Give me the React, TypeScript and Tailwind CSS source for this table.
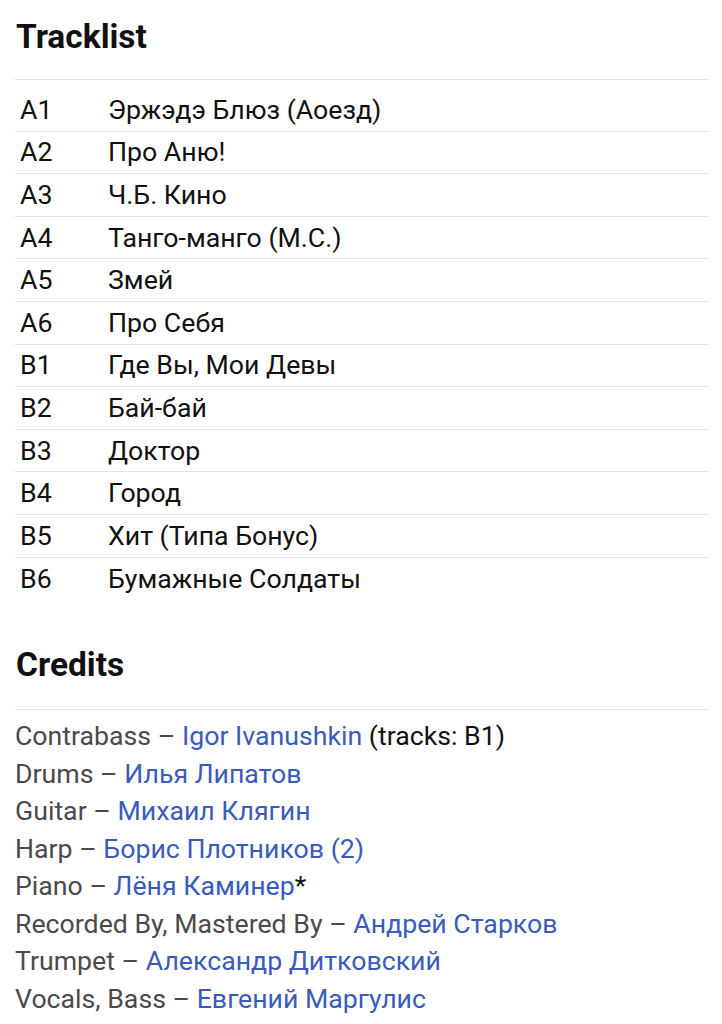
const tracks: [string, string][] = [
  ['A1', 'Эржэдэ Блюз (Аоезд)'],
  ['A2', 'Про Аню!'],
  ['A3', 'Ч.Б. Кино'],
  ['A4', 'Танго-манго (М.С.)'],
  ['A5', 'Змей'],
  ['A6', 'Про Себя'],
  ['B1', 'Где Вы, Мои Девы'],
  ['B2', 'Бай-бай'],
  ['B3', 'Доктор'],
  ['B4', 'Город'],
  ['B5', 'Хит (Типа Бонус)'],
  ['B6', 'Бумажные Солдаты'],
];

const credits: { role: string; name: string; tail?: string }[] = [
  { role: 'Contrabass', name: 'Igor Ivanushkin', tail: ' (tracks: B1)' },
  { role: 'Drums', name: 'Илья Липатов' },
  { role: 'Guitar', name: 'Михаил Клягин' },
  { role: 'Harp', name: 'Борис Плотников (2)' },
  { role: 'Piano', name: 'Лёня Каминер', tail: '*' },
  { role: 'Recorded By, Mastered By', name: 'Андрей Старков' },
  { role: 'Trumpet', name: 'Александр Дитковский' },
  { role: 'Vocals, Bass', name: 'Евгений Маргулис' },
];

export default function App() {
  return (
    <div className="min-h-[1024px] bg-white pl-[15px] pr-[14px] pt-[17px] text-[#111] font-['Roboto',sans-serif]">
      <h2 className="text-[33.5px] leading-[40px] font-bold pl-px">Tracklist</h2>
      <div className="mt-[22px] h-px bg-[#e3e3e3]" />
      <div className="mt-[9px]">
        {tracks.map(([pos, title], i) => (
          <div
            key={pos}
            className={
              'flex items-center h-[42.6px] text-[26.7px] ' +
              (i < tracks.length - 1 ? 'border-b border-[#e3e3e3]' : '')
            }
          >
            <span className="w-[93px] pl-[5px]">{pos}</span>
            <span>{title}</span>
          </div>
        ))}
      </div>

      <h2 className="mt-[45px] text-[33.5px] leading-[40px] font-bold pl-px">Credits</h2>
      <div className="mt-[24px] h-px bg-[#e3e3e3]" />
      <ul className="mt-[8px] text-[26.7px] leading-[37.5px]">
        {credits.map(c => (
          <li key={c.role} className="text-[#4a4a4a] whitespace-nowrap">
            {c.role} – <span className="text-[#3a5bbb]">{c.name}</span>
            {c.tail && <span className="text-[#111]">{c.tail}</span>}
          </li>
        ))}
      </ul>
    </div>
  );
}
